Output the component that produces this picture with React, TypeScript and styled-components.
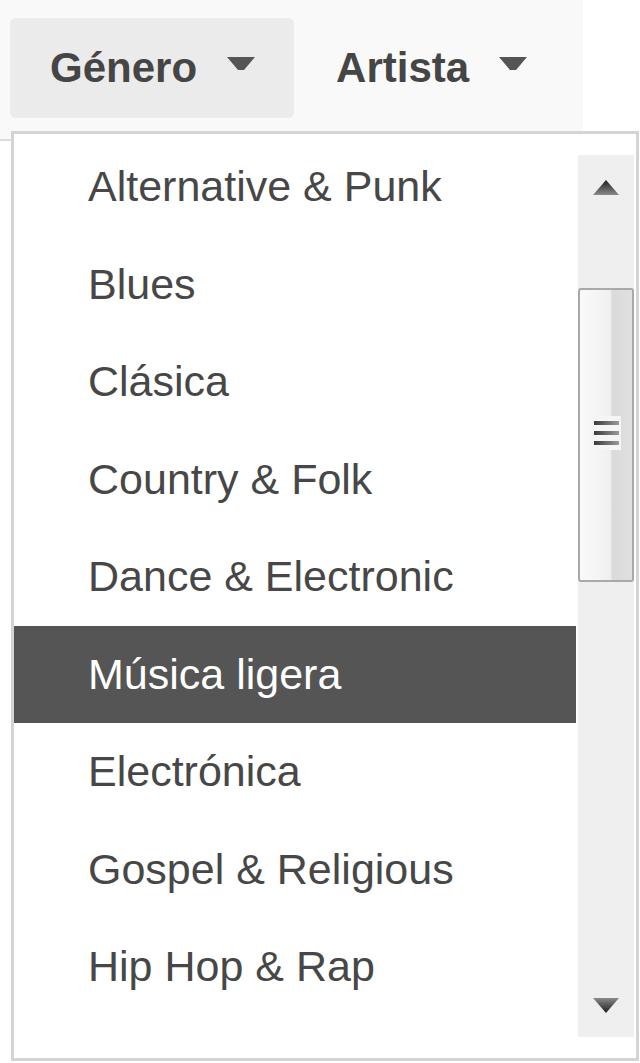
import React from "react";
import styled, { createGlobalStyle } from "styled-components";

const GlobalStyle = createGlobalStyle`
	html, body {
		margin: 0;
		padding: 0;
		background: #fff;
	}
	body {
		font-family: "Liberation Sans", Arial, sans-serif;
	}
`;

const Page = styled.div`
	position: relative;
	width: 640px;
	height: 1063px;
	overflow: hidden;
`;

const Header = styled.div`
	width: 583px;
	height: 141px;
	box-sizing: border-box;
	padding: 18px 0 0 10px;
	background: #f9f9f9;
	border-bottom: 2px solid #dcdcdc;
	display: flex;
	align-items: flex-start;
	gap: 2px;
`;

const Tab = styled.div<{ $active?: boolean }>`
	height: 100px;
	padding: 0 39px 0 40px;
	border-radius: 6px;
	background: ${(p) => (p.$active ? "#ebebeb" : "transparent")};
	display: flex;
	align-items: center;
	gap: 30px;
	font-size: 42px;
	font-weight: 700;
	color: #454545;
	cursor: pointer;
`;

const Caret = styled.svg`
	width: 28px;
	height: 14px;
	margin-bottom: 8px;
`;

const Menu = styled.div`
	position: absolute;
	top: 131px;
	left: 11px;
	width: 628px;
	height: 930px;
	box-sizing: border-box;
	border: 3px solid #d4d4d4;
	background: #fff;
	display: flex;
`;

const List = styled.ul`
	flex: 1;
	margin: 0;
	padding: 4px 0 0;
	list-style: none;
`;

const Item = styled.li<{ $selected?: boolean }>`
	height: 97.5px;
	display: flex;
	align-items: center;
	padding-left: 74px;
	font-size: 43px;
	color: ${(p) => (p.$selected ? "#fff" : "#474747")};
	background: ${(p) => (p.$selected ? "#555" : "transparent")};
	white-space: nowrap;
`;

const ScrollColumn = styled.div`
	width: 60px;
	padding: 21px 2px;
	box-sizing: border-box;
	display: flex;
`;

const Track = styled.div`
	flex: 1;
	background: #efefef;
	display: flex;
	flex-direction: column;
`;

const ArrowButton = styled.div`
	height: 64px;
	display: flex;
	align-items: center;
	justify-content: center;
	flex-shrink: 0;
`;

const ThumbArea = styled.div`
	flex: 1;
`;

const Thumb = styled.div`
	height: 294px;
	box-sizing: border-box;
	border: 2px solid #a9a9a9;
	border-radius: 3px;
	background: linear-gradient(
		to right,
		#fafafa 0%,
		#f0f0f0 58%,
		#dadada 62%,
		#e0e0e0 100%
	);
	display: flex;
	align-items: center;
	justify-content: center;
`;

const Grip = styled.div`
	width: 30px;
	height: 34px;
	margin-bottom: 4px;
	background: #f5f5f5;
	display: flex;
	flex-direction: column;
	align-items: center;
	justify-content: center;
	gap: 6px;
`;

const GripLine = styled.div`
	width: 25px;
	height: 4px;
	background: linear-gradient(to right, #3a3a3a, #9a9a9a);
`;

const genres = [
	"Alternative & Punk",
	"Blues",
	"Clásica",
	"Country & Folk",
	"Dance & Electronic",
	"Música ligera",
	"Electrónica",
	"Gospel & Religious",
	"Hip Hop & Rap",
];

const DownCaret = () => (
	<Caret viewBox="0 0 28 14">
		<polygon points="0,0 28,0 17,13 11,13" fill="#555" />
	</Caret>
);

const ScrollArrow = ({ up }: { up?: boolean }) => (
	<svg width="26" height="15" viewBox="0 0 26 15">
		<defs>
			<linearGradient id={up ? "gu" : "gd"} x1="0" y1={up ? "0" : "1"} x2="0" y2={up ? "1" : "0"}>
				<stop offset="0" stopColor="#1e1e1e" />
				<stop offset="1" stopColor="#8a8a8a" />
			</linearGradient>
		</defs>
		{up ? (
			<polygon points="13,0 26,15 0,15" fill="url(#gu)" />
		) : (
			<polygon points="0,0 26,0 13,15" fill="url(#gd)" />
		)}
	</svg>
);

export default function App() {
	const selected = "Música ligera";
	// scroll position of the list, 0..1
	const scroll = 0.15;
	const areaHeight = 754;
	const thumbHeight = 294;
	return (
		<Page>
			<GlobalStyle />
			<Header>
				<Tab $active>
					Género
					<DownCaret />
				</Tab>
				<Tab>
					Artista
					<DownCaret />
				</Tab>
			</Header>
			<Menu>
				<List>
					{genres.map((g) => (
						<Item key={g} $selected={g === selected}>
							{g}
						</Item>
					))}
				</List>
				<ScrollColumn>
					<Track>
						<ArrowButton>
							<ScrollArrow up />
						</ArrowButton>
						<ThumbArea style={{ paddingTop: scroll * (areaHeight - thumbHeight) }}>
							<Thumb>
								<Grip>
									<GripLine />
									<GripLine />
									<GripLine />
								</Grip>
							</Thumb>
						</ThumbArea>
						<ArrowButton>
							<ScrollArrow />
						</ArrowButton>
					</Track>
				</ScrollColumn>
			</Menu>
		</Page>
	);
}
